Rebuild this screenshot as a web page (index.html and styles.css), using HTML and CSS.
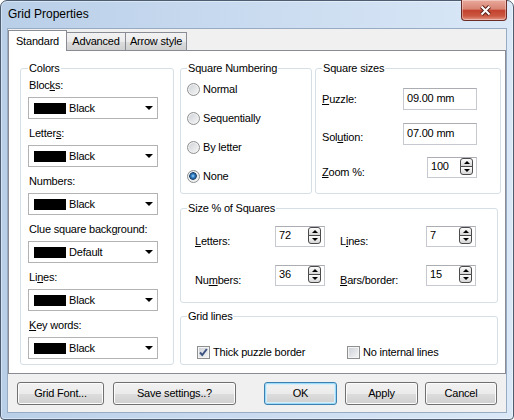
FILE: index.html
```html
<!DOCTYPE html>
<html lang="en">
<head>
	<meta charset="UTF-8">
	<title>Grid Properties</title>
	<link rel="stylesheet" href="styles.css">
</head>
<body>
	<div class="window">
		<div class="titlebar">
			<span class="title">Grid Properties</span>
			<div class="close">
				<svg width="13" height="11" viewBox="0 0 13 11">
					<path d="M2.5 1.5 L10.5 9.5 M10.5 1.5 L2.5 9.5" stroke="#5a2018" stroke-width="4"/>
					<path d="M2.5 1.5 L10.5 9.5 M10.5 1.5 L2.5 9.5" stroke="#fff" stroke-width="2"/>
				</svg>
			</div>
		</div>
		<div class="client">
			<div class="tabs">
				<div class="tab active">Standard</div>
				<div class="tab adv">Advanced</div>
				<div class="tab arrow">Arrow style</div>
			</div>
			<div class="panel">
				<!-- colour pickers -->
				<div class="group colors">
					<span class="legend">Colors</span>
					<span class="lbl">Bloc<u>k</u>s:</span>
					<div class="combo"><i class="swatch"></i>Black<b class="drop"></b></div>
					<span class="lbl">Letter<u>s</u>:</span>
					<div class="combo"><i class="swatch"></i>Black<b class="drop"></b></div>
					<span class="lbl">Numbers:</span>
					<div class="combo"><i class="swatch"></i>Black<b class="drop"></b></div>
					<span class="lbl">Clue square back<u>g</u>round:</span>
					<div class="combo"><i class="swatch"></i>Default<b class="drop"></b></div>
					<span class="lbl">Li<u>n</u>es:</span>
					<div class="combo"><i class="swatch"></i>Black<b class="drop"></b></div>
					<span class="lbl"><u>K</u>ey words:</span>
					<div class="combo"><i class="swatch"></i>Black<b class="drop"></b></div>
				</div>

				<div class="right">
					<div class="top-row">
						<div class="group numbering">
							<span class="legend">Square Numbering</span>
							<div class="radio"><i></i>Normal</div>
							<div class="radio"><i></i>Sequentially</div>
							<div class="radio"><i></i>By letter</div>
							<div class="radio"><i class="on"></i>None</div>
						</div>
						<div class="group sizes">
							<span class="legend">Square sizes</span>
							<div class="size-row first">
								<span><u>P</u>uzzle:</span>
								<div class="edit">09.00 mm</div>
							</div>
							<div class="size-row second">
								<span class="low">Sol<u>u</u>tion:</span>
								<div class="edit">07.00 mm</div>
							</div>
							<div class="size-row third">
								<span class="low2"><u>Z</u>oom %:</span>
								<div class="spin-box"><span class="num">100</span><span class="spin"><i class="up"></i><i class="down"></i></span></div>
							</div>
						</div>
					</div>

					<div class="group percent">
						<span class="legend">Size % of Squares</span>
						<div class="pgrid">
							<span class="plbl"><u>L</u>etters:</span>
							<div class="spin-box"><span class="num">72</span><span class="spin"><i class="up"></i><i class="down"></i></span></div>
							<span></span>
							<span class="plbl">L<u>i</u>nes:</span>
							<div class="spin-box"><span class="num">7</span><span class="spin"><i class="up"></i><i class="down"></i></span></div>

							<span class="plbl">Nu<u>m</u>bers:</span>
							<div class="spin-box"><span class="num">36</span><span class="spin"><i class="up"></i><i class="down"></i></span></div>
							<span></span>
							<span class="plbl"><u>B</u>ars/border:</span>
							<div class="spin-box"><span class="num">15</span><span class="spin"><i class="up"></i><i class="down"></i></span></div>
						</div>
					</div>

					<div class="group gridlines">
						<span class="legend">Grid lines</span>
						<div class="check-row">
							<div class="check thick">
								<span class="box">
									<svg width="11" height="11" viewBox="0 0 11 11"><path d="M2 5.5 L4.3 8 L8.8 2" fill="none" stroke="#3d5482" stroke-width="2"/></svg>
								</span>
								Thick puzzle border
							</div>
							<div class="check"><span class="box"></span>No internal lines</div>
						</div>
					</div>
				</div>
			</div>

			<div class="buttons">
				<button class="btn font">Grid Font...</button>
				<button class="btn save">Save settings..?</button>
				<button class="btn ok">OK</button>
				<button class="btn apply">Apply</button>
				<button class="btn cancel">Cancel</button>
			</div>
		</div>
	</div>
</body>
</html>
```
FILE: styles.css
```css
* {
	box-sizing: border-box;
}
html, body {
	margin: 0;
}
body {
	font: 11px/13px "Liberation Sans", Arial, sans-serif;
	letter-spacing: -0.2px;
	color: #000;
	background: #fff;
}
u {
	text-decoration: underline;
}

/* window frame */
.window {
	width: 514px;
	height: 420px;
	border: 1px solid #4d5e72;
	border-radius: 7px 7px 4px 4px;
	background: linear-gradient(to right, #b9cfe8, #c8daef 45%, #dae8f7);
	box-shadow: inset 0 0 0 1px rgba(255,255,255,.4);
	display: flex;
	flex-direction: column;
}
.titlebar {
	height: 27px;
	display: flex;
	align-items: center;
	padding-left: 7px;
}
.title {
	flex: 1;
	font-size: 12px;
	letter-spacing: 0;
}
.close {
	align-self: flex-start;
	margin: -1px 6px 0 0;
	width: 46px;
	height: 21px;
	border: 1px solid #6b2c25;
	border-top: none;
	border-radius: 0 0 4px 4px;
	background: linear-gradient(#e9a99b, #d88474 45%, #c3432f 52%, #cb5842 80%, #e39887);
	box-shadow: inset 0 0 0 1px rgba(255,255,255,.35);
	display: flex;
	align-items: center;
	justify-content: center;
}
.close svg {
	margin-left: 2px;
}

.client {
	margin: 0 6px 6px;
	height: 385px;
	border: 1px solid #97abc2;
	background: #f0f0f0;
	padding-top: 1px;
	display: flex;
	flex-direction: column;
}

/* tabs */
.tabs {
	display: flex;
	align-items: flex-end;
	height: 20px;
}
.tab {
	height: 18px;
	border: 1px solid #898c95;
	border-bottom: none;
	background: linear-gradient(#f2f2f2, #ebebeb 50%, #dddddd 51%, #cfcfcf);
	display: flex;
	align-items: center;
	justify-content: center;
	margin-left: -1px;
}
.tab.active {
	width: 59px;
	height: 21px;
	margin: 0 0 -1px 0;
	background: #fff;
	position: relative;
	z-index: 1;
}
.tab.adv {
	width: 60px;
}
.tab.arrow {
	width: 62px;
}
.panel {
	height: 324px;
	border: 1px solid #898c95;
	background: #fff;
	display: flex;
	gap: 6px;
	padding: 17px 0 0 11px;
}

/* group boxes */
.group {
	border: 1px solid #d5dfe5;
	border-radius: 3px;
	display: flex;
	flex-direction: column;
}
.legend {
	align-self: flex-start;
	margin: -7px 0 0 0;
	padding: 0 1px;
	background: #fff;
}

.colors {
	width: 154px;
	height: 297px;
	padding-left: 7px;
}
.colors .legend {
	margin-left: 0;
}
.lbl {
	margin-top: 4px;
	padding-left: 1px;
}
.combo {
	width: 130px;
	height: 22px;
	margin: 5px 0 4px;
	border: 1px solid #b3b3b3;
	background: #fff;
	display: flex;
	align-items: center;
	padding: 0 4px 0 5px;
}
.swatch {
	width: 32px;
	height: 11px;
	background: #000;
	margin-right: 3px;
}
.drop {
	margin-left: auto;
	border-top: 4px solid #000;
	border-left: 4px solid transparent;
	border-right: 4px solid transparent;
}

.right {
	width: 321px;
	display: flex;
	flex-direction: column;
}
.top-row {
	display: flex;
	gap: 3px;
	height: 126px;
}

/* radios */
.numbering {
	width: 132px;
	padding-left: 6px;
}
.radio {
	height: 29px;
	display: flex;
	align-items: center;
	gap: 3px;
}
.radio i {
	width: 13px;
	height: 13px;
	border-radius: 50%;
	border: 1px solid #8e8f8f;
	background: linear-gradient(135deg, #cdd1d6, #f7f7f7);
	box-shadow: inset 0 0 0 1px #f2f2f2;
}
.radio i.on {
	background: radial-gradient(circle at 45% 45%, #a9daf8 0, #3d8ad0 1.5px, #15416d 3.5px, #e9eaeb 4.2px, #f7f7f7);
}

/* square sizes */
.sizes {
	width: 186px;
	padding: 0 23px 0 6px;
}
.size-row {
	display: flex;
	justify-content: space-between;
	align-items: flex-start;
}
.size-row.first {
	margin-top: 13px;
	align-items: center;
}
.size-row.second {
	margin-top: 13px;
}
.size-row.third {
	margin-top: 12px;
}
.low {
	margin-top: 8px;
}
.low2 {
	margin-top: 9px;
}
.edit {
	width: 74px;
	height: 22px;
	border: 1px solid #c6c9cf;
	border-top-color: #abadb3;
	background: #fff;
	padding: 3px 0 0 3px;
}
.spin-box {
	width: 50px;
	height: 21px;
	border: 1px solid #c6c9cf;
	border-top-color: #abadb3;
	background: #fff;
	display: flex;
	align-items: flex-start;
	padding: 0 3px 0 3px;
}
.num {
	padding-top: 2px;
}
.spin {
	margin-left: auto;
	width: 13px;
	display: flex;
	flex-direction: column;
}
.spin i {
	height: 9px;
	border: 1px solid #4a4a4a;
	background: linear-gradient(#fdfdfd, #d6d6d6);
	display: flex;
	align-items: center;
	justify-content: center;
}
.spin i.up {
	border-radius: 3px 3px 0 0;
}
.spin i.down {
	margin-top: -1px;
	border-radius: 0 0 3px 3px;
}
.spin i.up::after {
	content: "";
	border-bottom: 3px solid #000;
	border-left: 3px solid transparent;
	border-right: 3px solid transparent;
}
.spin i.down::after {
	content: "";
	border-top: 3px solid #000;
	border-left: 3px solid transparent;
	border-right: 3px solid transparent;
}

/* size % */
.percent {
	width: 318px;
	height: 95px;
	margin-top: 14px;
	padding-left: 14px;
}
.percent .legend {
	margin-left: -8px;
}
.pgrid {
	margin-top: 11px;
	display: grid;
	grid-template-columns: 80px 50px 15px 86px 50px;
	grid-template-rows: 21px 21px;
	row-gap: 18px;
}
.plbl {
	margin-top: 9px;
}

/* grid lines */
.gridlines {
	width: 318px;
	height: 49px;
	margin-top: 13px;
	padding-left: 16px;
}
.gridlines .legend {
	margin-left: -10px;
}
.check-row {
	display: flex;
	margin-top: 23px;
}
.check {
	display: flex;
	align-items: center;
	gap: 3px;
}
.check.thick {
	width: 150px;
}
.box {
	width: 13px;
	height: 13px;
	border: 1px solid #8e8f8f;
	background: linear-gradient(135deg, #cbcfd5, #f6f6f6);
	box-shadow: inset 0 0 0 1px #f4f4f4;
	display: flex;
	align-items: center;
	justify-content: center;
}

/* bottom buttons */
.buttons {
	display: flex;
	margin-top: 8px;
	padding: 0 9px;
}
.btn {
	height: 23px;
	padding: 0;
	font: inherit;
	letter-spacing: inherit;
	color: #000;
	border: 1px solid #707070;
	border-radius: 3px;
	background: linear-gradient(#f2f2f2, #ebebeb 50%, #dddddd 51%, #cfcfcf);
	box-shadow: inset 0 0 0 1px #fcfcfc;
}
.btn.font {
	width: 87px;
}
.btn.save {
	width: 123px;
	margin-left: 9px;
}
.btn.ok {
	width: 73px;
	margin-left: auto;
	border-color: #3c7fb1;
	box-shadow: inset 0 0 0 1px #9ddcf8, inset 0 0 0 2px #d7eefa;
}
.btn.apply {
	width: 73px;
	margin-left: 8px;
}
.btn.cancel {
	width: 72px;
	margin-left: 7px;
}
```
